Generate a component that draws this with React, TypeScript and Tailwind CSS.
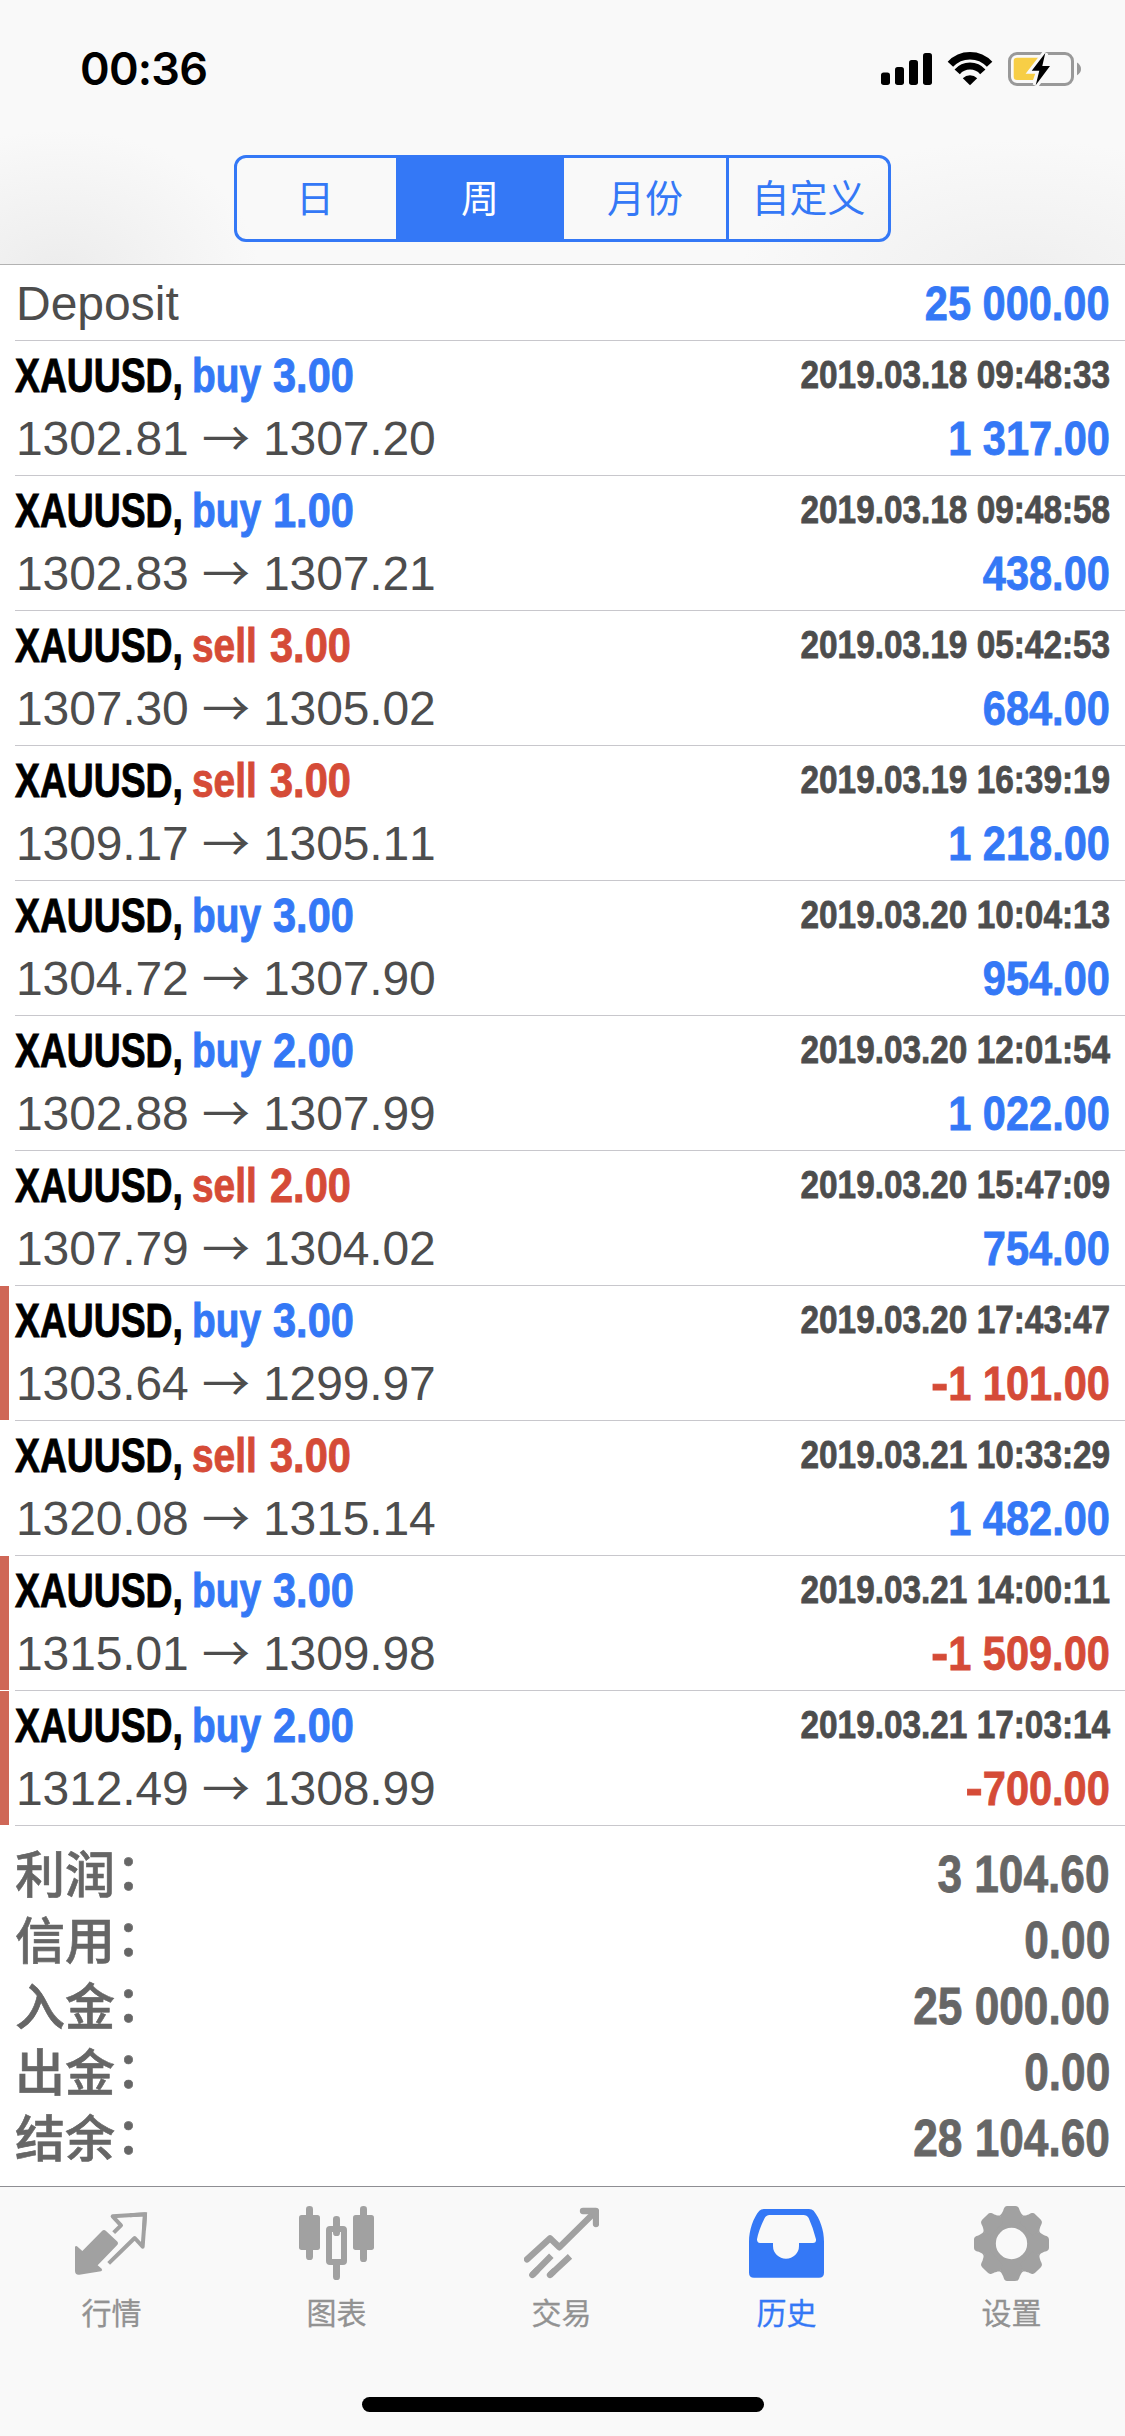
import type { ReactNode } from 'react';
import clsx from 'clsx';

type Side = 'buy' | 'sell';

interface Deal {
  side: Side;
  volume: string;
  open: string;
  close: string;
  time: string;
  profit: string;
}

const deals: Deal[] = [
  { side: 'buy', volume: '3.00', open: '1302.81', close: '1307.20', time: '2019.03.18 09:48:33', profit: '1 317.00' },
  { side: 'buy', volume: '1.00', open: '1302.83', close: '1307.21', time: '2019.03.18 09:48:58', profit: '438.00' },
  { side: 'sell', volume: '3.00', open: '1307.30', close: '1305.02', time: '2019.03.19 05:42:53', profit: '684.00' },
  { side: 'sell', volume: '3.00', open: '1309.17', close: '1305.11', time: '2019.03.19 16:39:19', profit: '1 218.00' },
  { side: 'buy', volume: '3.00', open: '1304.72', close: '1307.90', time: '2019.03.20 10:04:13', profit: '954.00' },
  { side: 'buy', volume: '2.00', open: '1302.88', close: '1307.99', time: '2019.03.20 12:01:54', profit: '1 022.00' },
  { side: 'sell', volume: '2.00', open: '1307.79', close: '1304.02', time: '2019.03.20 15:47:09', profit: '754.00' },
  { side: 'buy', volume: '3.00', open: '1303.64', close: '1299.97', time: '2019.03.20 17:43:47', profit: '-1 101.00' },
  { side: 'sell', volume: '3.00', open: '1320.08', close: '1315.14', time: '2019.03.21 10:33:29', profit: '1 482.00' },
  { side: 'buy', volume: '3.00', open: '1315.01', close: '1309.98', time: '2019.03.21 14:00:11', profit: '-1 509.00' },
  { side: 'buy', volume: '2.00', open: '1312.49', close: '1308.99', time: '2019.03.21 17:03:14', profit: '-700.00' },
];

const summary = [
  { label: '利润', value: '3 104.60' },
  { label: '信用', value: '0.00' },
  { label: '入金', value: '25 000.00' },
  { label: '出金', value: '0.00' },
  { label: '结余', value: '28 104.60' },
];

const periods = [
  { label: '日', className: 'w-[162px] pr-[3px]' },
  { label: '周', className: 'w-[165px]', active: true },
  { label: '月份', className: 'w-[165px]' },
  { label: '自定义', className: 'w-[159px]' },
];

function StatusIcons() {
  return (
    <svg width="205" height="40" viewBox="879 49 205 40">
      <rect x="881" y="72.5" width="9" height="12.5" rx="2.7" />
      <rect x="895" y="67" width="9" height="18" rx="2.7" />
      <rect x="909" y="60" width="9" height="25" rx="2.7" />
      <rect x="923" y="53" width="9" height="32" rx="2.7" />
      <g fill="none" stroke="#000">
        <path d="M950.4 64.3A26.6 26.6 0 0 1 989.6 64.3" strokeWidth="7.4" />
        <path d="M957.2 71.9A17 17 0 0 1 982.8 71.9" strokeWidth="7" />
      </g>
      <path d="M962.8 78.2A10.5 10.5 0 0 1 977.2 78.2L970 85.3Z" />
      <rect x="1009.5" y="53.5" width="63" height="31" rx="7.5" fill="none" stroke="#999" strokeWidth="3" />
      <path d="M1077 62.5Q1081 65 1081 69T1077 75.2Z" fill="#999" />
      <path d="M1017 57.7H1041L1033 80H1017Q1013.7 80 1013.7 76.7V61Q1013.7 57.7 1017 57.7Z" fill="#f7ce46" />
      <path
        d="M1045.3 53L1031.7 70.7H1039.3L1035.7 85.3L1050 66H1042.3Z"
        fill="#f9f9f9"
        stroke="#f9f9f9"
        strokeWidth="6"
      />
      <path d="M1045.3 53L1031.7 70.7H1039.3L1035.7 85.3L1050 66H1042.3Z" />
    </svg>
  );
}

function QuotesIcon() {
  return (
    <svg width="75" height="75" viewBox="102 108 225 225">
      <path
        d="M186 183Q192 177 198 183L231 214Q237 220 231 226L173 286L185 296Q189 301 183 304L118 314Q105 315 105 303V232Q106 226 111 229L127 243Z"
        fill="currentColor"
      />
      <g fill="none" stroke="currentColor" strokeWidth="12">
        <path d="M221 188L243 166L218 139L315 133L308 230L284 204L206 280" strokeLinejoin="round" />
        <path d="M270 136L315 133L312 180" />
      </g>
    </svg>
  );
}

function ChartIcon() {
  return (
    <svg width="75" height="75" viewBox="777 108 225 225" fill="currentColor">
      <rect x="798" y="108" width="21" height="162" rx="10" />
      <rect x="777" y="135" width="63" height="105" rx="8" />
      <rect x="879" y="138" width="21" height="60" rx="10" />
      <rect x="879" y="270" width="21" height="60" rx="10" />
      <rect x="867" y="177" width="45" height="99" rx="3" fill="none" stroke="currentColor" strokeWidth="18" strokeLinejoin="round" />
      <rect x="960" y="108" width="21" height="168" rx="10" />
      <rect x="939" y="135" width="63" height="105" rx="8" />
    </svg>
  );
}

function TradeIcon() {
  return (
    <svg width="75" height="75" viewBox="102 108 225 225" fill="none" stroke="currentColor" strokeWidth="19">
      <path d="M111 268L180 205L208 232L315 126" strokeLinecap="round" strokeLinejoin="round" />
      <path d="M279 123H318V162" strokeLinecap="round" strokeLinejoin="round" />
      <path d="M127 315L184 257M180 315L240 259" />
      <path d="M127 315L140 302M180 315L190 305" strokeLinecap="round" />
    </svg>
  );
}

function HistoryIcon() {
  return (
    <svg width="75" height="75" viewBox="777 108 225 225">
      <path
        fill="currentColor"
        fillRule="evenodd"
        d="M777 215C777 180 790 143 808 122Q813 117 822 117H957Q966 117 971 122C990 146 1002 180 1002 215V308Q1002 323 987 323H792Q777 323 777 308ZM801 208Q805 184 823 146Q828 135 839 135H940Q951 135 956 144Q970 175 978 208Q979 219 969 219H927V228A39 38 0 0 1 849 228V219H810Q801 219 801 208Z"
      />
    </svg>
  );
}

function SettingsIcon() {
  return (
    <svg width="75" height="75" viewBox="-112.5 -112.5 225 225" fill="currentColor">
      <circle r="66" fill="none" stroke="currentColor" strokeWidth="38" />
      {[0, 45, 90, 135, 180, 225, 270, 315].map(angle => (
        <path
          key={angle}
          transform={`rotate(${angle})`}
          d="M-35-84C-29-88-28-93-25-98C-22-109-19-112.5-11-112.5H11C19-112.5 22-109 25-98C28-93 29-88 35-84L27-62H-27Z"
        />
      ))}
    </svg>
  );
}

const tabs: { label: string; icon: ReactNode; active?: boolean }[] = [
  { label: '行情', icon: <QuotesIcon /> },
  { label: '图表', icon: <ChartIcon /> },
  { label: '交易', icon: <TradeIcon /> },
  { label: '历史', icon: <HistoryIcon />, active: true },
  { label: '设置', icon: <SettingsIcon /> },
];

// Bold figures squeezed to a condensed width, anchored to the right edge
function Amount({ value, className }: { value: string; className?: string }) {
  const negative = value.startsWith('-');
  return (
    <span
      className={clsx(
        'origin-right font-bold whitespace-nowrap [-webkit-text-stroke:0.8px_currentColor]',
        className,
      )}
    >
      {negative && <span className="inline-block origin-right scale-x-125">-</span>}
      {negative ? value.slice(1) : value}
    </span>
  );
}

function DealRow({ deal }: { deal: Deal }) {
  const loss = deal.profit.startsWith('-');
  const buy = deal.side === 'buy';
  return (
    <li className="flex h-[135px]">
      <div className={clsx('h-[134px] w-[9px] shrink-0', loss && 'bg-[#cf6757]')} />
      <div className="ml-[6px] flex-1 border-b border-[#c8c7cc] pt-[3px] pr-[15px] text-[48px] leading-[63px]">
        <div className="flex h-[63px] justify-between">
          <div className="flex font-bold [-webkit-text-stroke:0.9px_currentColor]">
            <span className="w-[177px] origin-left scale-x-[0.777] text-black">XAUUSD,</span>
            <span className={clsx('flex', buy ? 'text-[#3478f6]' : 'text-[#d54b37]')}>
              <span className={clsx('origin-left scale-x-[0.81]', buy ? 'w-[81px]' : 'w-[78px]')}>{deal.side}</span>
              <span className="origin-left scale-x-[0.865]">{deal.volume}</span>
            </span>
          </div>
          <Amount value={deal.time} className="scale-x-[0.855] text-[39px] leading-[61px] text-[#4d4d4d]" />
        </div>
        <div className="flex h-[63px] justify-between">
          <span className="pl-px tracking-[-0.12px] whitespace-pre text-[#4d4d4d]">
            {deal.open}{' '}
            <span className="inline-block translate-y-[1px] font-['Noto_Sans_CJK_SC',sans-serif] leading-none">→</span>{' '}
            {deal.close}
          </span>
          <Amount value={deal.profit} className={clsx('scale-x-[0.865]', loss ? 'text-[#d54b37]' : 'text-[#3478f6]')} />
        </div>
      </div>
    </li>
  );
}

export default function App() {
  return (
    <div className="flex h-[2436px] w-[1125px] flex-col overflow-hidden bg-white font-['Liberation_Sans','Noto_Sans_CJK_SC',sans-serif] [font-kerning:none]">
      <header className="h-[265px] shrink-0 border-b border-[#b2b2b2] bg-[#f9f9f9] bg-[radial-gradient(200px_145px_at_60px_275px,#ececec,#f9f9f900),radial-gradient(280px_135px_at_1020px_275px,#efefef,#f9f9f900)]">
        <div className="flex h-[132px] items-start justify-between pr-[41px] pl-[80px]">
          <span className="pt-[42px] font-['Inter',sans-serif] text-[45px] leading-[54px] font-semibold tracking-[-0.8px] text-black">
            00:36
          </span>
          <div className="pt-[49px]">
            <StatusIcons />
          </div>
        </div>
        <div className="mx-auto mt-[23px] flex h-[87px] w-[657px] divide-x-3 divide-[#3478f6] overflow-hidden rounded-[12px] border-3 border-[#3478f6]">
          {periods.map(period => (
            <button
              key={period.label}
              className={clsx(
                'flex shrink-0 items-center justify-center pt-[1px] text-[38px] leading-none',
                period.className,
                period.active ? 'bg-[#3478f6] text-white' : 'text-[#3478f6]',
              )}
            >
              {period.label}
            </button>
          ))}
        </div>
      </header>

      <main className="flex-1">
        <div className="ml-[15px] flex h-[76px] items-center justify-between border-b border-[#c8c7cc] pt-[2px] pr-[15px] text-[48px] leading-[60px]">
          <span className="pl-px text-[#4d4d4d]">Deposit</span>
          <Amount value="25 000.00" className="scale-x-[0.865] text-[#3478f6]" />
        </div>
        <ul>
          {deals.map(deal => (
            <DealRow key={deal.time} deal={deal} />
          ))}
        </ul>
        <dl className="px-[15px] pt-[16px] text-[51px] leading-[66px] text-[#666]">
          {summary.map(row => (
            <div key={row.label} className="flex h-[66px] justify-between">
              <dt className="-mt-[4px] font-['Noto_Sans_CJK_SC',sans-serif] text-[50px] font-medium [-webkit-text-stroke:0.6px_currentColor]">
                {row.label}
                <span className="inline-block translate-x-px -translate-y-[3px]">：</span>
              </dt>
              <dd className="flex">
                <Amount value={row.value} className="scale-x-[0.867]" />
              </dd>
            </div>
          ))}
        </dl>
      </main>

      <footer className="h-[250px] shrink-0 border-t border-[#8e8e93] bg-[#f9f9f9]">
        <nav className="-ml-px grid w-[1125px] grid-cols-5 pt-[19px]">
          {tabs.map(tab => (
            <div
              key={tab.label}
              className={clsx('flex flex-col items-center', tab.active ? 'text-[#3478f6]' : 'text-[#a1a1a1]')}
            >
              {tab.icon}
              <span
                className={clsx(
                  'mt-[13px] text-[30px] leading-[40px] [-webkit-text-stroke:0.3px_currentColor]',
                  !tab.active && 'text-[#929292]',
                )}
              >
                {tab.label}
              </span>
            </div>
          ))}
        </nav>
        <div className="mx-auto mt-[63px] h-[15px] w-[402px] rounded-full bg-black" />
      </footer>
    </div>
  );
}
